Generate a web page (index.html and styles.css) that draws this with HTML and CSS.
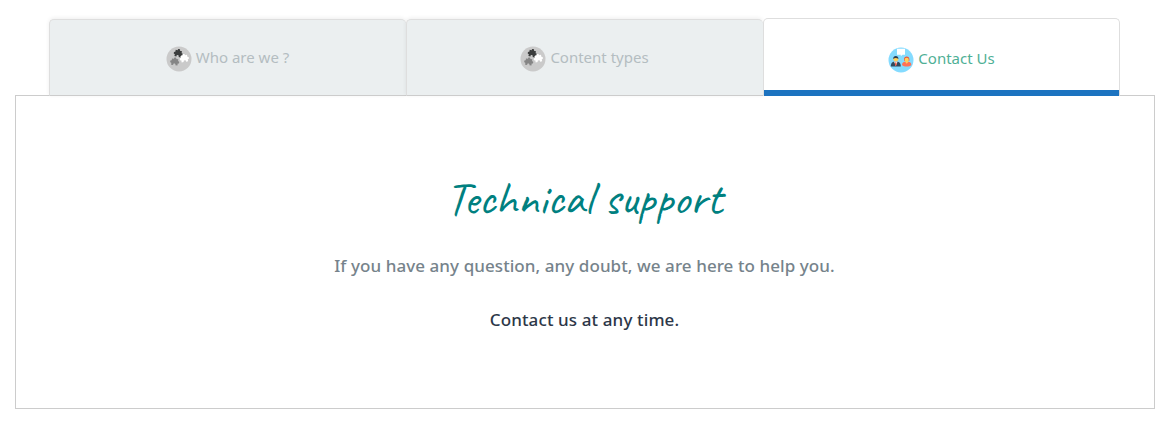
FILE: index.html
```html
<!DOCTYPE html>
<html lang="en">
<head>
<meta charset="utf-8">
<title>Contact Us</title>
<link rel="stylesheet" href="styles.css">
</head>
<body>
<svg class="defs" width="0" height="0" aria-hidden="true">
  <defs>
    <path id="piece" d="M.8 .8H2.900C2.200-1 5.800-1 5.100 .8H7.200V2.900C9 2.200 9 5.800 7.200 5.100V7.200H5.100C5.700 5 2.300 5 2.900 7.200H.8V5.100C-1 5.800-1 2.200 .8 2.900Z"/>
    <symbol id="puzzle" viewBox="0 0 26 26">
      <circle cx="13" cy="13" r="12.5" fill="#cacaca"/>
      <use href="#piece" transform="translate(8.200 3.600) rotate(12 4 4)" fill="#3b3d3d"/>
      <use href="#piece" transform="translate(4.700 12) rotate(8 4 4)" fill="#858585"/>
      <use href="#piece" transform="translate(14.200 8.500) rotate(-10 4 4) scale(1.03)" fill="#fff"/>
    </symbol>
  </defs>
</svg>
<nav class="tabs">
  <a class="tab"><svg class="icon"><use href="#puzzle"/></svg><span class="label">Who are we ?</span></a>
  <a class="tab"><svg class="icon"><use href="#puzzle"/></svg><span class="label">Content types</span></a>
  <a class="tab active">
    <svg class="icon" viewBox="0 0 26 26">
      <circle cx="13" cy="13" r="12.5" fill="#84dbff"/>
      <path d="M9 1.800h8v6h-2.500L12.800 9.200V7.800H9z" fill="#fff"/>
      <path d="M2.800 19.500c0-4 2-5 5-5s5 1 5 5z" fill="#324a5e"/>
      <path d="M6 14.500h3.600L7.800 19z" fill="#fff"/>
      <path d="M7.300 15.200h1l.4 2.800-.9 1-.9-1z" fill="#f1543f"/>
      <circle cx="7.800" cy="12.200" r="2.400" fill="#ffd05b"/>
      <path d="M5.200 12c-.5-4 5.700-4 5.200 0-1.500-1.200-3.700-1.200-5.200 0z" fill="#2b3b4e"/>
      <path d="M16 12.800c-.5-4.500 5.900-4.500 5.400 0v1h-5.400z" fill="#e9573f"/>
      <path d="M14 18c0-2.500 2-3.400 4.700-3.400s4.700.9 4.700 3.400c-2 2-7.400 2-9.400 0z" fill="#ff7058"/>
      <path d="M16.900 14.500h3.600l-1.800 2.300z" fill="#ffd05b"/>
      <circle cx="18.700" cy="12.900" r="2.100" fill="#ffd05b"/>
    </svg><span class="label">Contact Us</span>
  </a>
</nav>
<main class="panel">
  <h1 class="title">Technical support</h1>
  <p class="lead">If you have any question, any doubt, we are here to help you.</p>
  <p class="note">Contact us at any time.</p>
</main>
</body>
</html>
```
FILE: styles.css
```css
* { box-sizing: border-box; }
body { margin: 0; padding: 18px 14px 0 15px; background: #fff; font-family: "Trebuchet MS", "Noto Sans", sans-serif; }
.defs { display: block; height: 0; }
.tabs { display: flex; align-items: flex-end; width: 1071px; height: 78px; margin-left: 34px; position: relative; z-index: 1; }
.tab { flex: 0 0 357px; display: flex; align-items: flex-start; justify-content: center; height: 77px; padding: 26px 1px 0 0; gap: 4px; border: 1px solid #dedede; border-right: 0; border-bottom-color: #ccc; border-radius: 5px 5px 0 0; background: #ebeff0; box-shadow: 0 -1px 4px rgba(0,0,0,.07); color: #b4bdc1; font-size: 15px; line-height: 22px; }
.tab.active { height: 78px; padding: 28px 0 0; border-right: 1px solid #dedede; border-bottom: 0; background: linear-gradient(#1c73c0, #1c73c0) bottom / 100% 6px no-repeat padding-box #fff; box-shadow: none; color: #4fb096; }
.icon { width: 26px; height: 26px; flex: none; }
.label { white-space: nowrap; }
.panel { width: 1140px; height: 314px; margin-top: -1px; border: 1px solid #ccc; padding-top: 77px; text-align: center; }
.title { margin: 0 2px 0 0; font: 500 47px/52px "Caveat", cursive; letter-spacing: .05px; color: #008080; }
.lead, .note { margin: 0 1px 0 0; font-size: 17px; line-height: 24px; font-weight: 500; }
.lead { margin-top: 29px; color: #76838b; letter-spacing: .07px; }
.note { margin-top: 30px; color: #2d3748; letter-spacing: .12px; }
```
